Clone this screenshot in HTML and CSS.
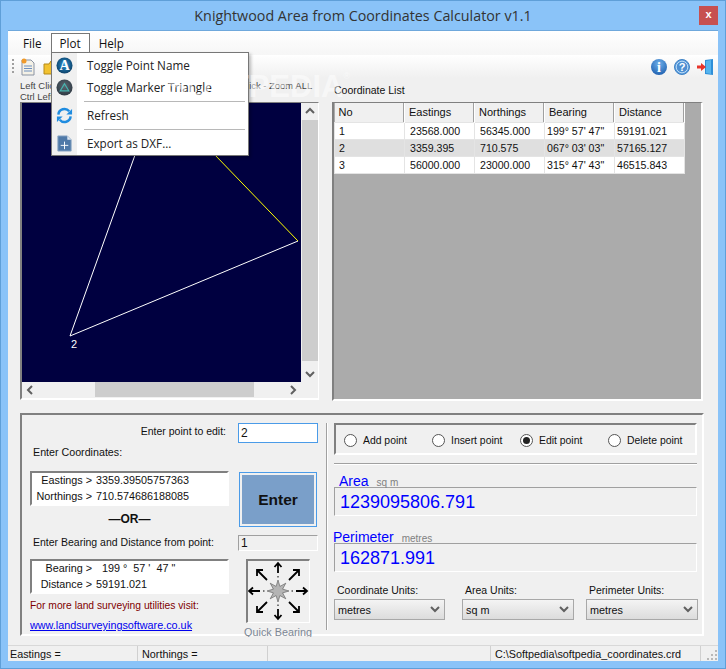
FILE: index.html
```html
<!DOCTYPE html>
<html lang="en">
<head>
    <meta charset="UTF-8">
    <title>Knightwood Area from Coordinates Calculator v1.1</title>
    <link rel="stylesheet" href="styles.css">
</head>
<body>
    <div class="window">
        <div class="titlebar">
            <span class="title">Knightwood Area from Coordinates Calculator v1.1</span>
            <span class="close">x</span>
        </div>
        <div class="client">
            <div class="menubar">
                <span class="menu-item">File</span>
                <span class="menu-item active">Plot</span>
                <span class="menu-item">Help</span>
            </div>
            <div class="toolbar">
                <span class="grip"></span>
                <svg class="tool" width="16" height="18" viewBox="0 0 16 18">
                    <path d="M2 2h9l3 3v12H2z" fill="#f4f1e6" stroke="#8a93a3"/>
                    <path d="M4 8h8M4 10.500h8M4 13h8" stroke="#6d8fc0"/>
                    <circle cx="4" cy="3" r="2.500" fill="#f09a2a"/>
                </svg>
                <svg class="tool" width="16" height="18" viewBox="0 0 16 18">
                    <path d="M1 16V6h5l2-3h7v13z" fill="#f2c230" stroke="#b58a18"/>
                </svg>
                <span class="tool-spacer"></span>
                <svg class="tool-r" width="18" height="18" viewBox="0 0 18 18">
                    <defs>
                        <radialGradient id="blueball" cx="50%" cy="30%" r="75%">
                            <stop offset="0" stop-color="#6fb0ea"/>
                            <stop offset="1" stop-color="#1c5dae"/>
                        </radialGradient>
                        <radialGradient id="aball" cx="50%" cy="45%" r="60%">
                            <stop offset="0" stop-color="#2a95d8"/>
                            <stop offset="1" stop-color="#0b3a5e"/>
                        </radialGradient>
                        <radialGradient id="tball" cx="50%" cy="40%" r="60%">
                            <stop offset="0" stop-color="#5a6670"/>
                            <stop offset="1" stop-color="#2f3a44"/>
                        </radialGradient>
                    </defs>
                    <circle cx="9" cy="9" r="8" fill="url(#blueball)"/>
                    <text x="9" y="14" class="icon-i">i</text>
                </svg>
                <svg class="tool-r" width="18" height="18" viewBox="0 0 18 18">
                    <circle cx="9" cy="9" r="7.500" fill="#5b9bdc" stroke="#3f83c6"/>
                    <circle cx="9" cy="9" r="5.800" fill="#4e8fd2" stroke="#bcdcf6"/>
                    <text x="9" y="13" class="icon-q">?</text>
                </svg>
                <svg class="tool-r" width="18" height="18" viewBox="0 0 18 18">
                    <path d="M9 2l8-1v16l-8-1z" fill="#2f8fd8"/>
                    <path d="M10 3l5-1v14l-5-1z" fill="#56b4ee"/>
                    <path d="M1 7.500h4V5l5 4-5 4v-2.500H1z" fill="#e8342a"/>
                </svg>
            </div>
            <div class="top-area">
                <div class="plot-col">
                    <div class="hint">Left Click - Zoom In, Right Click - Zoom Out, Double Click - Zoom ALL<br>Ctrl Left Click - Pan</div>
                    <div class="plot-frame">
                        <div class="plot-main">
                            <div class="plot-left">
                                <svg class="plot" width="279" height="279" viewBox="0 0 279 279">
                                    <path d="M48 233L113 52M48 233L276 138" fill="none" stroke="#fff"/>
                                    <path d="M193 52L276 138" fill="none" stroke="#ffff00"/>
                                    <text x="49" y="245" class="plot-label">2</text>
                                </svg>
                                <div class="hscroll">
                                    <svg width="16" height="16" viewBox="0 0 16 16"><path d="M10 4l-4 4 4 4" class="chev"/></svg>
                                    <div class="htrack"><div class="hthumb"></div></div>
                                    <svg width="16" height="16" viewBox="0 0 16 16"><path d="M6 4l4 4-4 4" class="chev"/></svg>
                                </div>
                            </div>
                            <div class="vscroll">
                                <svg width="16" height="16" viewBox="0 0 16 16"><path d="M4 10l4-4 4 4" class="chev"/></svg>
                                <div class="vtrack"><div class="vthumb"></div></div>
                                <svg width="16" height="16" viewBox="0 0 16 16"><path d="M4 6l4 4 4-4" class="chev"/></svg>
                            </div>
                        </div>
                    </div>
                </div>
                <div class="list-col">
                    <div class="list-label">Coordinate List</div>
                    <div class="list-frame">
                        <table class="coords">
                            <thead>
                                <tr><th>No</th><th>Eastings</th><th>Northings</th><th>Bearing</th><th>Distance</th></tr>
                            </thead>
                            <tbody>
                                <tr><td>1</td><td>23568.000</td><td>56345.000</td><td>199° 57' 47"</td><td>59191.021</td></tr>
                                <tr class="alt"><td>2</td><td>3359.395</td><td>710.575</td><td>067° 03' 03"</td><td>57165.127</td></tr>
                                <tr><td>3</td><td>56000.000</td><td>23000.000</td><td>315° 47' 43"</td><td>46515.843</td></tr>
                            </tbody>
                        </table>
                    </div>
                </div>
            </div>
            <div class="bottom-group">
                <div class="edit-pane">
                    <div class="edit-left">
                        <div class="edit-label">Enter point to edit:</div>
                        <div class="coord-label">Enter Coordinates:</div>
                        <div class="entry-box">
                            <div class="entry-line"><span class="entry-key">Eastings &gt;</span><span>3359.39505757363</span></div>
                            <div class="entry-line"><span class="entry-key">Northings &gt;</span><span>710.574686188085</span></div>
                        </div>
                        <div class="or-label">—OR—</div>
                        <div class="bearing-label">Enter Bearing and Distance from point:</div>
                        <div class="entry-box">
                            <div class="entry-line"><span class="entry-key">Bearing &gt;</span><span class="bearing-val">199 °&nbsp; 57 '&nbsp; 47 "</span></div>
                            <div class="entry-line"><span class="entry-key">Distance &gt;</span><span>59191.021</span></div>
                        </div>
                        <div class="promo">For more land surveying utilities visit:</div>
                        <a class="promo-link" href="#">www.landsurveyingsoftware.co.uk</a>
                    </div>
                    <div class="edit-right">
                        <div class="point-input">2</div>
                        <div class="enter-btn"><span class="enter-inner">Enter</span></div>
                        <div class="from-point">1</div>
                        <div class="quick-box">
                            <svg width="61" height="61" viewBox="0 0 61 61">
                                <g class="arrows">
                                    <path d="M30 12V2M26.500 6L30 2l3.500 4"/>
                                    <path d="M30 48v10M26.500 54l3.500 4 3.500-4"/>
                                    <path d="M12 30H1M5 26.500L1 30l4 3.500"/>
                                    <path d="M48 30h11M55 26.500l4 3.500-4 3.500"/>
                                    <path d="M19 19L9 9M9 15V9h6"/>
                                    <path d="M41 19L51 9M45 9h6v6"/>
                                    <path d="M19 41L9 51M9 45v6h6"/>
                                    <path d="M41 41l10 10M45 51h6v-6"/>
                                </g>
                                <path d="M30 19l1.900 6.400 5.900-3.200-3.200 5.900L41 30l-6.400 1.900 3.200 5.900-5.900-3.200L30 41l-1.900-6.400-5.900 3.200 3.200-5.900L19 30l6.400-1.900-3.200-5.900 5.900 3.200z" fill="#b4b4b4" stroke="#555" stroke-width=".6"/>
                                <path d="M30 15v1.500M30 43.500V45M15 30h1.500M43.500 30H45" stroke="#000"/>
                            </svg>
                        </div>
                        <div class="quick-label">Quick Bearing</div>
                    </div>
                </div>
                <div class="result-pane">
                    <div class="radio-group">
                        <label class="radio"><span class="dot"></span>Add point</label>
                        <label class="radio"><span class="dot"></span>Insert point</label>
                        <label class="radio"><span class="dot on"></span>Edit point</label>
                        <label class="radio"><span class="dot"></span>Delete point</label>
                    </div>
                    <div class="rule"></div>
                    <div class="result-head area-head"><span class="result-name">Area</span><span class="result-unit">sq m</span></div>
                    <div class="result-box">1239095806.791</div>
                    <div class="result-head perim-head"><span class="result-name">Perimeter</span><span class="result-unit">metres</span></div>
                    <div class="result-box">162871.991</div>
                    <div class="units">
                        <div class="unit-col coord-unit">
                            <div class="unit-label">Coordinate Units:</div>
                            <div class="select">metres<svg width="12" height="10" viewBox="0 0 12 10"><path d="M2 2l4 4 4-4" class="chev"/></svg></div>
                        </div>
                        <div class="unit-col area-unit">
                            <div class="unit-label">Area Units:</div>
                            <div class="select">sq m<svg width="12" height="10" viewBox="0 0 12 10"><path d="M2 2l4 4 4-4" class="chev"/></svg></div>
                        </div>
                        <div class="unit-col perim-unit">
                            <div class="unit-label">Perimeter Units:</div>
                            <div class="select">metres<svg width="12" height="10" viewBox="0 0 12 10"><path d="M2 2l4 4 4-4" class="chev"/></svg></div>
                        </div>
                    </div>
                </div>
            </div>
            <div class="statusbar">
                <span class="status-cell east">Eastings =</span>
                <span class="status-cell north">Northings =</span>
                <span class="status-cell blank"></span>
                <span class="status-cell path">C:\Softpedia\softpedia_coordinates.crd</span>
                <svg class="size-grip" width="12" height="12" viewBox="0 0 12 12"><path d="M9 2h2v2H9zM5 6h2v2H5zM9 6h2v2H9zM1 10h2v2H1zM5 10h2v2H5zM9 10h2v2H9z" fill="#b8b8b8"/></svg>
            </div>
        </div>

        <!-- dropdown of the Plot menu -->
        <div class="dropdown">
            <div class="drop-row">
                <svg class="drop-icon" width="17" height="17" viewBox="0 0 18 18">
                    <circle cx="9" cy="9" r="8.500" fill="url(#aball)"/>
                    <text x="9" y="14" class="icon-a">A</text>
                </svg>
                <span>Toggle Point Name</span>
            </div>
            <div class="drop-row">
                <svg class="drop-icon" width="17" height="17" viewBox="0 0 18 18">
                    <circle cx="9" cy="9" r="8.500" fill="url(#tball)"/>
                    <path d="M9 5l4.500 7.500h-9z" fill="none" stroke="#47b5b0" stroke-width="1.300"/>
                </svg>
                <span>Toggle Marker Triangle</span>
            </div>
            <div class="drop-sep"></div>
            <div class="drop-row">
                <svg class="drop-icon" width="17" height="17" viewBox="0 0 18 18">
                    <path d="M2.500 8A6.500 6.500 0 0 1 14 4.500" fill="none" stroke="#1f8ce0" stroke-width="2.600"/>
                    <path d="M17 2v6h-6z" fill="#1f8ce0"/>
                    <path d="M15.500 10A6.500 6.500 0 0 1 4 13.500" fill="none" stroke="#1f8ce0" stroke-width="2.600"/>
                    <path d="M1 16v-6h6z" fill="#1f8ce0"/>
                </svg>
                <span>Refresh</span>
            </div>
            <div class="drop-sep"></div>
            <div class="drop-row">
                <svg class="drop-icon" width="17" height="17" viewBox="0 0 18 18">
                    <path d="M2 1h10l4 4v12H2z" fill="#4f79a8" stroke="#8aa6c4"/>
                    <path d="M12 1v4h4z" fill="#dfe8f2"/>
                    <path d="M9 7v8M5 11h8" stroke="#fff"/>
                </svg>
                <span>Export as DXF...</span>
            </div>
        </div>
        <div class="watermark">SOFTPEDIA<sup>®</sup></div>
    </div>
</body>
</html>
```

FILE: styles.css
```css
* {
    box-sizing: border-box;
}

html, body {
    margin: 0;
    padding: 0;
}

body {
    width: 726px;
    height: 669px;
    overflow: hidden;
    font-family: "Liberation Sans", Arial, sans-serif;
    font-size: 10.8px;
    color: #111;
}

.window {
    position: relative;
    width: 726px;
    height: 669px;
    padding: 0 7px 7px;
    display: flex;
    flex-direction: column;
    background: #8ac3f8;
    border: 1px solid #5f9fd8;
}

.titlebar {
    height: 29px;
    flex: none;
    display: flex;
    align-items: center;
    justify-content: center;
    position: relative;
}

.title {
    font-family: "Open Sans", sans-serif;
    font-size: 14.3px;
    color: #333;
}

.close {
    position: absolute;
    right: 0;
    top: 5px;
    width: 19px;
    height: 19px;
    background: #c75050;
    color: #fff;
    font-weight: bold;
    font-size: 11px;
    text-align: center;
    line-height: 17px;
}

.client {
    flex: 1;
    display: flex;
    flex-direction: column;
    background: #f0f0f0;
    border-top: 1px solid #6fa8dc;
    min-height: 0;
}

.menubar {
    height: 24px;
    flex: none;
    padding: 2px 0 0 6px;
    display: flex;
    background: linear-gradient(#fff, #f6f6f6);
    font-family: "Open Sans", sans-serif;
    font-size: 11.7px;
}

.menu-item {
    padding: 1px 8px 0;
    height: 20px;
    border: 1px solid transparent;
    border-bottom: none;
}

.menu-item.active {
    border-color: #777;
    background: #fff;
}

.toolbar {
    height: 23px;
    flex: none;
    padding: 0 4px;
    display: flex;
    align-items: center;
    background: linear-gradient(#fff, #f0f0f0);
}

.grip {
    width: 2px;
    height: 16px;
    margin-right: 6px;
    background: repeating-linear-gradient(#a0a0a0 0 2px, transparent 2px 4px);
}

.tool {
    margin-right: 7px;
}

.tool-spacer {
    flex: 1;
}

.tool-r {
    margin-left: 5px;
}

.icon-i, .icon-q, .icon-a {
    fill: #fff;
    text-anchor: middle;
    font-weight: bold;
}

.icon-i {
    font-family: "Liberation Serif", serif;
    font-size: 14px;
}

.icon-q {
    font-size: 11px;
}

.icon-a {
    font-family: "Liberation Serif", serif;
    font-size: 15px;
}

.top-area {
    flex: none;
    display: flex;
    height: 323px;
    padding-left: 12px;
}

.plot-col {
    width: 299px;
    margin-right: 13px;
}

.hint {
    height: 24px;
    font-size: 9.45px;
    line-height: 11px;
    padding-top: 2px;
    white-space: nowrap;
    color: #444;
}

.plot-frame {
    width: 299px;
    height: 298px;
    border: solid;
    border-width: 1px 1px 2px 2px;
    border-color: #808080 #fff #fff #808080;
    background: #f0f0f0;
}

.plot-main {
    display: flex;
}

.plot-left {
    width: 279px;
    flex: none;
}

.plot {
    display: block;
    background: #000040;
}

.plot-label {
    fill: #fff;
    font-size: 11px;
}

.vscroll {
    width: 16px;
    height: 279px;
    margin-left: 1px;
    display: flex;
    flex-direction: column;
}

.vscroll svg, .hscroll svg {
    flex: none;
    display: block;
}

.vtrack {
    flex: 1;
}

.vthumb {
    height: 241px;
    margin-top: 1px;
    background: #cdcdcd;
}

.hscroll {
    display: flex;
    height: 16px;
}

.htrack {
    flex: 1;
    padding-left: 57px;
}

.hthumb {
    width: 159px;
    height: 15px;
    background: #cdcdcd;
}

.chev {
    fill: none;
    stroke: #606060;
    stroke-width: 2;
}

.list-col {
    width: 371px;
}

.list-label {
    height: 24px;
    padding: 6px 0 0 2px;
    font-size: 10.5px;
}

.list-frame {
    height: 299px;
    background: #ababab;
    border: solid;
    border-width: 1px 2px 2px 2px;
    border-color: #808080 #fff #fff #808080;
}

.coords {
    border-collapse: collapse;
    table-layout: fixed;
    width: 350px;
    font-size: 10.6px;
}

.coords th {
    width: 70px;
    height: 19px;
    padding: 0 0 0 4px;
    background: #f0f0f0;
    font-size: 11px;
    font-weight: normal;
    text-align: left;
    border-right: 1px solid #fff;
    box-shadow: inset -1px 0 #a0a0a0;
}

.coords td {
    height: 17px;
    padding: 0 0 0 4px;
    background: #fff;
    border: 1px solid #e4e4e4;
    white-space: nowrap;
    overflow: hidden;
}

.coords td:nth-child(2), .coords td:nth-child(3) {
    padding-left: 5px;
}

.coords td:nth-child(4), .coords td:nth-child(5) {
    padding-left: 2px;
}

.coords .alt td {
    background: #dfdfdf;
}

.bottom-group {
    margin: 12px 14px 0 12px;
    height: 223px;
    flex: none;
    display: flex;
    border: 2px solid;
    border-color: #808080 #fff #fff #808080;
}

.edit-pane {
    width: 305px;
    display: flex;
    margin: 8px 0 4px;
    padding-left: 8px;
    border-right: 1px solid #a0a0a0;
    box-shadow: 1px 0 #fff;
}

.edit-left {
    width: 199px;
    margin-right: 9px;
}

.edit-label {
    text-align: right;
    height: 20px;
    padding: 2px 3px 0 0;
    font-size: 10.5px;
}

.coord-label {
    margin: 3px 0 0 3px;
    height: 25px;
    font-size: 10.7px;
}

.entry-box {
    height: 35px;
    display: flex;
    flex-direction: column;
    gap: 1px;
    background: #fff;
    border: 2px solid;
    border-color: #808080 #fff #fff #808080;
    line-height: 15px;
}

.entry-line {
    display: flex;
    white-space: nowrap;
}

.entry-key {
    width: 60px;
    text-align: right;
    margin-right: 4px;
}

.bearing-val {
    padding-left: 6px;
}

.or-label {
    height: 24px;
    padding-top: 6px;
    text-align: center;
    font-weight: bold;
    font-size: 12px;
}

.bearing-label {
    height: 29px;
    padding: 6px 0 0 3px;
    white-space: nowrap;
    font-size: 10.5px;
}

.promo {
    margin-top: 6px;
    color: #800000;
    height: 19px;
    font-size: 10.3px;
}

.promo-link {
    color: #0000ee;
    white-space: nowrap;
}

.edit-right {
    width: 80px;
    display: flex;
    flex-direction: column;
}

.edit-right > div {
    flex: none;
}

.point-input {
    height: 20px;
    background: #fff;
    border: 1px solid #4a9be8;
    padding: 2px 0 0 2px;
    font-size: 12px;
}

.enter-btn {
    width: 78px;
    height: 55px;
    margin: 29px 0 0 1px;
    padding: 2px;
    border: 1px solid #4a9be8;
    background: #f0f0f0;
}

.enter-inner {
    display: flex;
    align-items: center;
    justify-content: center;
    height: 100%;
    background: #7a9fc9;
    font-weight: bold;
    font-size: 15.5px;
    padding-top: 1px;
}

.from-point {
    height: 16px;
    margin-top: 8px;
    border: 1px solid;
    border-color: #a0a0a0 #fff #fff #a0a0a0;
    padding-left: 2px;
    font-size: 12px;
    line-height: 15px;
}

.quick-box {
    width: 64px;
    height: 64px;
    margin: 8px 0 0 8px;
    border: 1px solid;
    border-width: 2px 1px 1px 2px;
    border-color: #808080 #fff #fff #808080;
}

.quick-box svg {
    display: block;
}

.arrows path {
    fill: none;
    stroke: #000;
    stroke-width: 1.8;
}

.quick-label {
    width: 74px;
    margin: 2px 0 0 3px;
    height: 12px;
    overflow: hidden;
    white-space: nowrap;
    color: #7c8794;
    text-align: center;
    line-height: 14px;
}

.result-pane {
    padding: 8px 0 0 7px;
}

.radio-group {
    width: 363px;
    height: 32px;
    display: grid;
    grid-template-columns: 88px 88px 88px 1fr;
    align-items: center;
    padding: 3px 0 0 8px;
    border: 2px solid;
    border-color: #808080 #fff #fff #808080;
    font-size: 10.4px;
}

.radio {
    display: flex;
    align-items: center;
    gap: 6px;
}

.dot {
    width: 13px;
    height: 13px;
    border: 1px solid #555;
    border-radius: 50%;
    background: #fff;
    display: flex;
    align-items: center;
    justify-content: center;
}

.dot.on::after {
    content: "";
    width: 7px;
    height: 7px;
    border-radius: 50%;
    background: #222;
}

.rule {
    width: 363px;
    height: 2px;
    margin-top: 8px;
    background: #a0a0a0;
    border-bottom: 1px solid #fff;
}

.result-head {
    display: flex;
    align-items: baseline;
    height: 22px;
    color: #0000ff;
    font-size: 14px;
}

.area-head {
    padding: 8px 0 0 5px;
}

.perim-head {
    height: 27px;
    padding-top: 13px;
    margin-left: -1px;
}

.result-unit {
    margin-left: 8px;
    color: #808080;
    font-size: 10px;
}

.result-box {
    width: 363px;
    height: 29px;
    border: 1px solid;
    border-color: #a0a0a0 #fff #fff #a0a0a0;
    color: #0000ff;
    font-size: 18px;
    padding: 4px 0 0 5px;
}

.units {
    display: flex;
    margin-top: 12px;
}

.unit-col {
    width: 112px;
}

.coord-unit {
    width: 111px;
}

.area-unit {
    margin-left: 17px;
}

.perim-unit {
    margin-left: 12px;
}

.unit-label {
    height: 15px;
    padding-left: 3px;
    font-size: 10.5px;
}

.select {
    height: 21px;
    padding: 0 3px;
    display: flex;
    align-items: center;
    justify-content: space-between;
    border: 1px solid #a8a8a8;
    background: linear-gradient(#f4f4f4, #dcdcdc);
}

.statusbar {
    margin-top: auto;
    height: 16px;
    flex: none;
    display: flex;
    align-items: center;
    border-top: 1px solid #d8d8d8;
}

.status-cell {
    height: 15px;
    line-height: 16px;
    padding-left: 2px;
    border-right: 1px solid #d0d0d0;
    white-space: nowrap;
}

.east {
    width: 130px;
}

.north {
    width: 130px;
    padding-left: 4px;
}

.blank {
    width: 223px;
}

.path {
    width: 210px;
    padding-left: 4px;
}

.size-grip {
    margin-left: 5px;
}

.dropdown {
    position: absolute;
    left: 50px;
    top: 51px;
    width: 198px;
    height: 104px;
    padding: 1px 3px;
    background: #fff;
    border: 1px solid #777;
    box-shadow: 2px 2px 3px rgba(0,0,0,0.25);
    font-family: "Open Sans", sans-serif;
    font-size: 11.7px;
    color: #222;
}

.dropdown::before {
    content: "";
    position: absolute;
    left: 0;
    top: 0;
    bottom: 0;
    width: 25px;
    background: #f0f0f0;
}

.drop-row {
    position: relative;
    display: flex;
    align-items: center;
    height: 22px;
}

.drop-icon {
    margin: 0 14px 0 1px;
    flex: none;
}

.drop-sep {
    position: relative;
    height: 1px;
    margin: 3px 0 2px 29px;
    background: #b8b8b8;
}

.watermark {
    position: absolute;
    left: 165px;
    top: 68px;
    font-size: 31px;
    font-weight: bold;
    white-space: nowrap;
    color: rgba(255,255,255,0.5);
    pointer-events: none;
}

.watermark sup {
    font-size: 9px;
    font-weight: normal;
    vertical-align: 18px;
}
```
